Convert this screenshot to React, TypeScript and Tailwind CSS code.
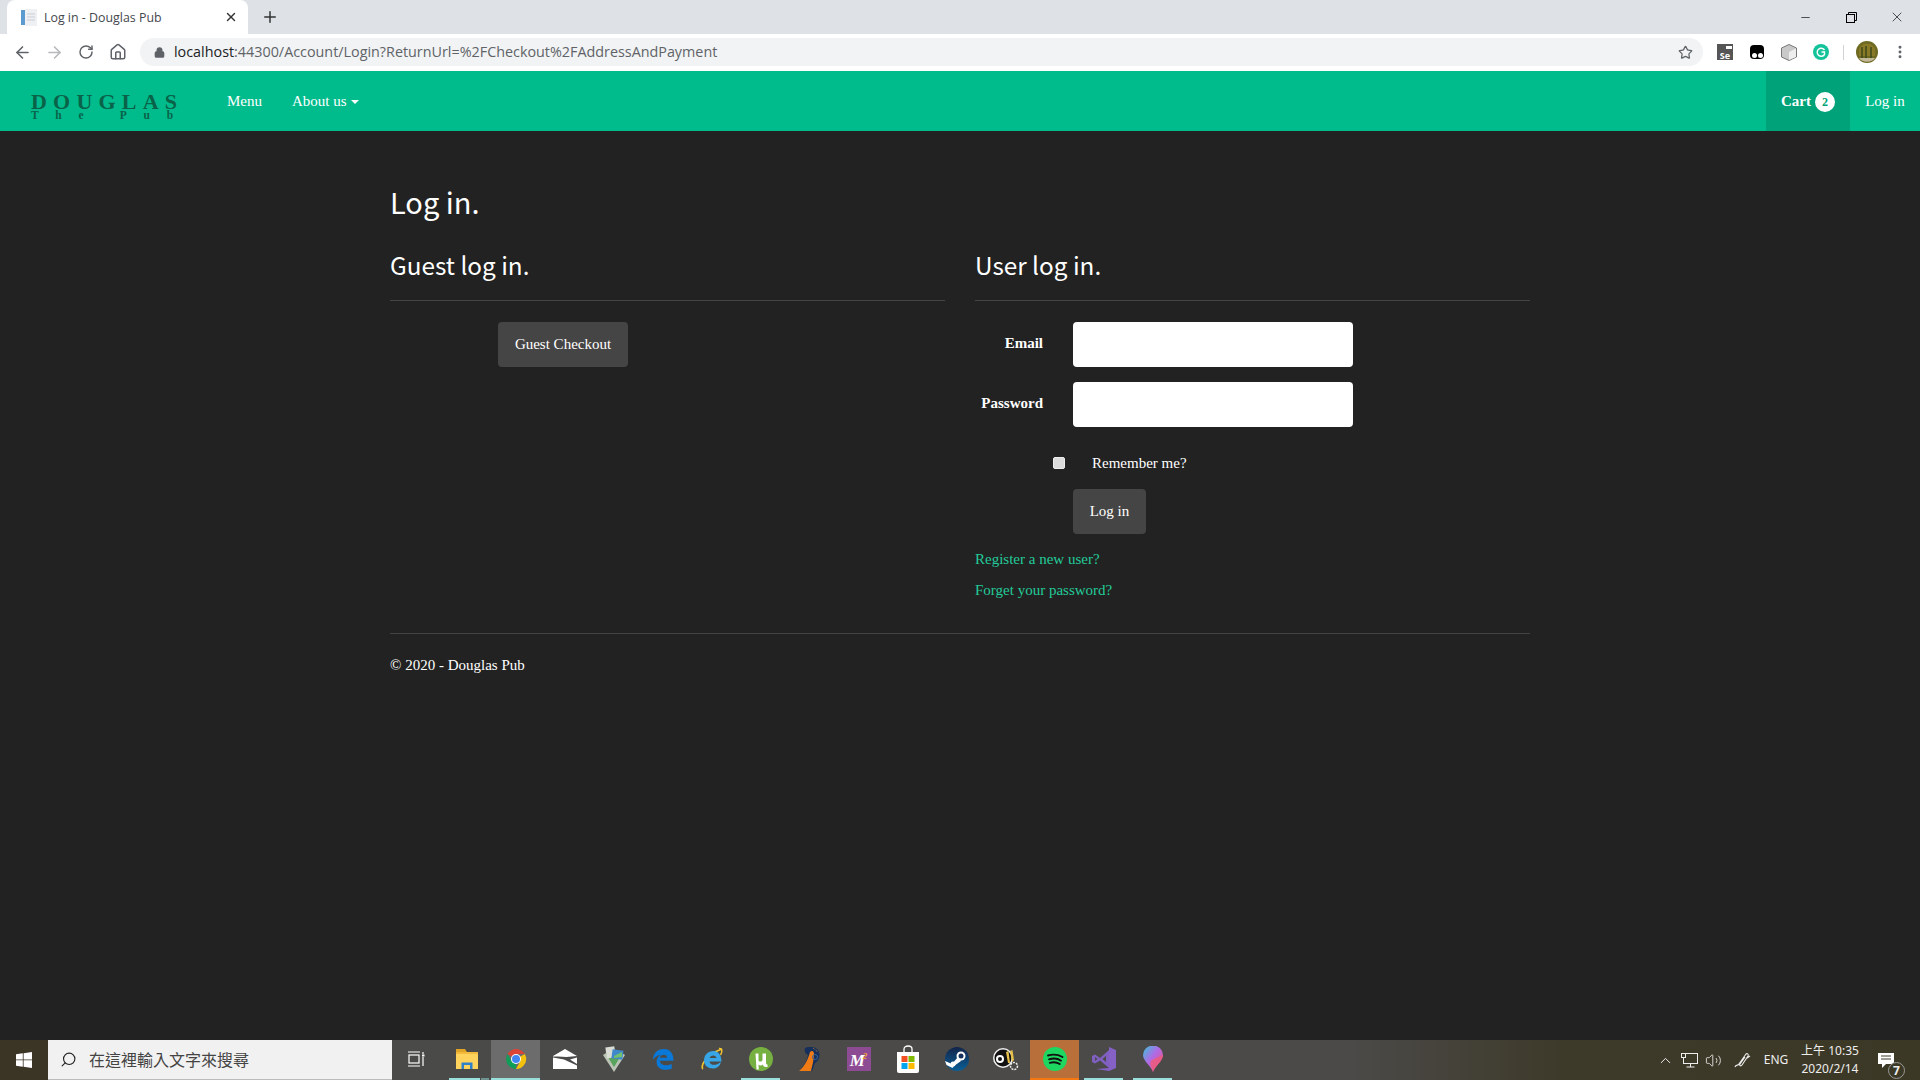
import React from "react";
import { ArrowLeft, ArrowRight, RotateCw, Home, Lock, Star, Plus, X, Minus, MoreVertical, Search, ChevronUp, Volume2 } from "lucide-react";

const Tool = ({ children, className = "" }: { children: React.ReactNode; className?: string }) => (
  <div className={`flex h-full items-center justify-center ${className}`}>{children}</div>
);

const WinLogo = () => (
  <svg width="16" height="16" viewBox="0 0 16 16" fill="#fff">
    <path d="M0 2.3 6.8 1.3V7.5H0zM7.6 1.2 16 0V7.5H7.6zM0 8.3H6.8V14.7L0 13.7zM7.6 8.3H16V16L7.6 14.8z" />
  </svg>
);

const TaskView = () => (
  <svg width="18" height="18" viewBox="0 0 18 18" fill="none" stroke="#fff" strokeWidth="1.2" className="-translate-x-0.5">
    <path d="M1 2H13M1 16H13" />
    <rect x="2" y="5" width="10" height="8" />
    <path d="M16 2V4M16 7V16" />
    <rect x="15" y="4.5" width="2.5" height="2" fill="#fff" stroke="none" />
  </svg>
);

const Folder = () => (
  <svg width="24" height="24" viewBox="0 0 24 24">
    <path d="M1 2H10L12 5H1z" fill="#e0a526" />
    <rect x="1" y="5" width="22" height="17" fill="#ffd35c" />
    <rect x="1" y="5" width="22" height="2" fill="#f2bb3d" />
    <path d="M6.5 22V15.5H17.5V22H15V18H9V22z" fill="#2f80c9" />
  </svg>
);

const Chrome = () => (
  <svg width="24" height="24" viewBox="0 0 48 48">
    <path d="M24 24 7 14A20 20 0 0 1 41.5 14H24z" fill="#db4437" />
    <path d="M24 24 41.5 14A20 20 0 0 1 24 44L33 28z" fill="#f4c20d" />
    <path d="M24 24 24 44A20 20 0 0 1 7 14L15.5 29z" fill="#0f9d58" />
    <circle cx="24" cy="24" r="10" fill="#fff" />
    <circle cx="24" cy="24" r="8" fill="#4285f4" />
  </svg>
);

const Mail = () => (
  <svg width="24" height="20" viewBox="0 0 24 20" fill="#fff">
    <path d="M0 7 12 0 24 7 13.500 8 5 7.500 0 7.500z" />
    <path d="M0 8.500 11 10.500 24 16.500V20H0z" />
    <path d="M17 10.500 24 8.500V15z" />
  </svg>
);

const Shield = () => (
  <svg width="24" height="26" viewBox="0 0 24 26">
    <path d="M1 9 12 26 23 9 20 7 12 20 4 7z" fill="#b9c4b4" />
    <path d="M4 8 12 21 20 8z" fill="#58a45c" />
    <rect x="4" y="1" width="9" height="11" fill="#d8dcd4" transform="rotate(-8 8 6)" />
    <rect x="10" y="4" width="11" height="9" fill="#3f88c9" transform="rotate(8 15 8)" />
    <path d="M12 10 20 6V11L12 12z" fill="#74c16d" />
  </svg>
);

const Edge = () => (
  <svg width="22" height="22" viewBox="0 0 24 24">
    <path d="M1 13C1 6 6 1 13 1C20 1 23.500 6 23.500 14H8.500C9 18.500 15 20.500 21.500 17.500V22.500C13 25.500 4.500 23 5 14.500C5.300 11 7.500 8 10 7C6 7.500 2.500 10 1 13ZM8.500 10.500H16.500C16.500 6.500 10 6 8.500 10.500Z" fill="#0a78d7" />
  </svg>
);

const IE = () => (
  <svg width="24" height="24" viewBox="0 0 24 24">
    <path d="M3 22C0 20 5 8 22 2" fill="none" stroke="#f0c330" strokeWidth="1.700" />
    <path d="M19 1.500C22 1 23 4 20.500 8" fill="none" stroke="#f0c330" strokeWidth="1.500" />
    <path d="M4 13.500C4 8 8 4 13.500 4C18 4 21.500 8 21.500 14.500H9.500C10 18.500 16 19 20 15.500H21C19.500 19.500 16.500 21.500 13 21.500C8 21.500 4 18.500 4 13.500ZM9.500 11H16.500C16 7.500 10.500 7.500 9.500 11Z" fill="#37a5e6" />
  </svg>
);

const UTorrent = () => (
  <svg width="24" height="24" viewBox="0 0 24 24">
    <circle cx="12" cy="12" r="12" fill="#76b041" />
    <path d="M6.500 6.500H9.500V13C9.500 15 13 15 13.500 13V6.500H17V15.500C17 17 17.500 17.500 18.500 17.500V20C15 20.500 14 19 14 17.500C12.500 19 10.500 18.500 9.500 17.500L9.800 22.500H7.500z" fill="#fff" />
  </svg>
);

const Matlabish = () => (
  <svg width="22" height="24" viewBox="0 0 22 24">
    <path d="M6 1C10 -1 15 -.5 18 2C22 6 21 13 16 16C15 18 14 22 13 24H0C4 20 8 14 9 8C7 7 5 5 6 1Z" fill="#15305c" />
    <path d="M11 5C13 3 15 4 15 7C15 12 13 20 12 24H0C5 20 9 13 11 5Z" fill="#f07a14" />
    <circle cx="16" cy="10" r="2.500" fill="none" stroke="#38639a" strokeWidth="1" />
    <path d="M14 1 19 5" stroke="#c47b30" strokeWidth="1" strokeDasharray="1 1" />
  </svg>
);

const Mpurple = () => (
  <div className="flex h-6 w-6 items-end justify-center bg-[#8d4b94] pb-0.5 text-[17px] leading-none font-bold text-white italic [font-family:'Liberation_Serif',serif]">
    M<span className="mb-2 -ml-0.5 text-[9px] leading-none text-[#f0a030]">2</span>
  </div>
);

const Store = () => (
  <svg width="24" height="28" viewBox="0 0 24 28">
    <path d="M8 8V4C8 0 16 0 16 4V8" fill="none" stroke="#fff" strokeWidth="1.300" />
    <path d="M1 7H23V26A2 2 0 0 1 21 28H3A2 2 0 0 1 1 26z" fill="#fff" />
    <rect x="5.500" y="11" width="6" height="6" fill="#f25022" />
    <rect x="12.500" y="11" width="6" height="6" fill="#7fba00" />
    <rect x="5.500" y="18" width="6" height="6" fill="#00a4ef" />
    <rect x="12.500" y="18" width="6" height="6" fill="#ffb900" />
  </svg>
);

const Steam = () => (
  <svg width="24" height="24" viewBox="0 0 24 24">
    <defs>
      <linearGradient id="st" x1="0" y1="0" x2="0" y2="1">
        <stop offset="0" stopColor="#12254a" />
        <stop offset="1" stopColor="#0b5f96" />
      </linearGradient>
    </defs>
    <circle cx="12" cy="12" r="12" fill="url(#st)" />
    <path d="M0 14 7 17 13 10 16 14 9 19 7.500 21 1.500 18z" fill="#fff" />
    <circle cx="16" cy="9" r="4.500" fill="#fff" />
    <circle cx="16" cy="9" r="2.500" fill="#16315c" />
    <circle cx="8" cy="17" r="2.500" fill="#fff" />
  </svg>
);

const Bee = () => (
  <svg width="26" height="24" viewBox="0 0 26 24">
    <ellipse cx="10" cy="11" rx="10" ry="10" fill="#eee" />
    <ellipse cx="10" cy="11" rx="8.500" ry="8.500" fill="#111" />
    <circle cx="7" cy="12" r="4" fill="#fff" />
    <circle cx="7" cy="12" r="2" fill="#111" />
    <path d="M13 5 15 16H17L15.500 4zM17 4 19 15 21 13 19.500 3z" fill="#e6c04a" />
    <circle cx="21" cy="19" r="3.500" fill="none" stroke="#eee" strokeWidth="1.500" strokeDasharray="2 1" />
  </svg>
);

const Spotify = () => (
  <svg width="24" height="24" viewBox="0 0 24 24">
    <circle cx="12" cy="12" r="12" fill="#1ed760" />
    <path d="M5 8.500C10 7 15 7.500 19.500 10M6 12.300C10 11 15 11.500 18 13.700M6.800 15.800C10 15 14 15.200 16.800 17" fill="none" stroke="#111" strokeWidth="1.900" strokeLinecap="round" />
  </svg>
);

const VS = () => (
  <svg width="24" height="24" viewBox="0 0 24 24">
    <path d="M17 0 24 3V21L17 24 4 22 17 21z" fill="#8661c5" />
    <path d="M0 9 3 7.500 8 11 17 3V21L8 13.500 3 16.500 0 15zM3 10V14L5.500 12zM10.500 12 14 15V9z" fill="#7f5fc0" />
  </svg>
);

const Maps = () => (
  <svg width="20" height="26" viewBox="0 0 20 26">
    <defs>
      <linearGradient id="mp" x1="0" y1="0" x2="1" y2="1">
        <stop offset="0" stopColor="#36c6d8" />
        <stop offset=".45" stopColor="#b06ae6" />
        <stop offset="1" stopColor="#f0506e" />
      </linearGradient>
    </defs>
    <path d="M10 26C8 20 0 15 0 9A10 9.500 0 0 1 20 9C20 15 12 20 10 26Z" fill="url(#mp)" />
    <path d="M10 26C9.500 22 5 16 9 14C13 12 17 10 20 9C20 15 12 20 10 26Z" fill="#ef5a7a" opacity=".8" />
  </svg>
);

const taskIcons: { icon: React.ReactNode; bg?: string; line?: React.ReactNode }[] = [
  { icon: <TaskView /> },
  {
    icon: <Folder />,
    line: (
      <div className="flex h-0.5 justify-center gap-px pl-1">
        <div className="w-[31px] bg-[#99dfdc]" />
        <div className="w-2 bg-[#6f9391]" />
      </div>
    ),
  },
  { icon: <Chrome />, bg: "bg-[#6c6c6c]", line: <div className="h-0.5 bg-[#99dfdc]" /> },
  { icon: <Mail /> },
  { icon: <Shield /> },
  { icon: <Edge /> },
  { icon: <IE /> },
  { icon: <UTorrent />, line: <div className="mx-[5px] h-0.5 bg-[#99dfdc]" /> },
  { icon: <Matlabish /> },
  { icon: <Mpurple /> },
  { icon: <Store /> },
  { icon: <Steam /> },
  { icon: <Bee /> },
  { icon: <Spotify />, bg: "bg-[#b86f3a]", line: <div className="h-0.5 bg-[#f5770f]" /> },
  { icon: <VS />, line: <div className="mx-[5px] h-0.5 bg-[#99dfdc]" /> },
  { icon: <Maps />, line: <div className="mx-[5px] h-0.5 bg-[#99dfdc]" /> },
];

const SANS = "[font-family:'Noto_Sans','Noto_Sans_CJK_TC',sans-serif]";
const HEAD = "[font-family:'Noto_Sans_CJK_TC',sans-serif]";

function Browser() {
  return (
    <div className="[font-family:'Open_Sans',sans-serif]">
      <div className="flex h-[34px] items-stretch bg-[#dee1e6] pl-[7px]">
        <div className="flex w-[241px] items-center rounded-t-[8px] bg-white pr-2.5 pl-3.5">
          <svg width="16" height="17" viewBox="0 0 16 17" className="shrink-0">
            <rect x="0" y="1" width="4" height="15" fill="#5b9bd0" />
            <rect x="4" y="0" width="12" height="17" fill="#eef0f3" />
            <path d="M6 5H14M6 8H14M6 11H14" stroke="#c9ced6" strokeWidth="1" />
          </svg>
          <span className="mt-0.5 ml-[7px] flex-1 text-[12.4px] text-[#45484d]">Log in - Douglas Pub</span>
          <X size={14} strokeWidth={2.4} className="text-[#333]" />
        </div>
        <div className="flex w-[44px] items-center justify-center">
          <Plus size={18} strokeWidth={2} className="text-[#333]" />
        </div>
        <div className="flex-1" />
        <Tool className="w-[46px]"><Minus size={13} strokeWidth={1.2} className="text-black" /></Tool>
        <Tool className="w-[46px]">
          <svg width="11" height="11" viewBox="0 0 11 11" fill="none" stroke="#000" strokeWidth="1">
            <rect x=".5" y="2.500" width="8" height="8" />
            <path d="M2.500 2.500V.5H10.500V8.500H8.500" />
          </svg>
        </Tool>
        <Tool className="w-[46px]"><X size={16} strokeWidth={1} className="text-black" /></Tool>
      </div>
      <div className="flex h-[37px] items-center bg-white pb-px pl-1.5">
        <Tool className="w-8"><ArrowLeft size={19} strokeWidth={2} className="text-[#5f6368]" /></Tool>
        <Tool className="w-8"><ArrowRight size={19} strokeWidth={2} className="text-[#b6b8bb]" /></Tool>
        <Tool className="w-8"><RotateCw size={16} strokeWidth={2.2} className="text-[#5f6368]" /></Tool>
        <Tool className="w-8"><Home size={18} strokeWidth={2} className="text-[#5f6368]" /></Tool>
        <div className="ml-1.5 flex h-7 w-[1563px] items-center rounded-full bg-[#f1f3f4] pr-2.5 pl-3.5">
          <Lock size={11} strokeWidth={3} fill="#5f6368" className="text-[#5f6368]" />
          <span className="ml-[9px] flex-1 text-[14.35px] whitespace-nowrap text-[#5f6368]">
            <span className="text-[#202124]">localhost</span>:44300/Account/Login?ReturnUrl=%2FCheckout%2FAddressAndPayment
          </span>
          <Star size={15} strokeWidth={2} className="text-[#5f6368]" />
        </div>
        <Tool className="ml-[6px] w-8">
          <div className="flex h-4 w-4 flex-col items-end justify-between bg-[#555] text-[9px] leading-[9px] font-bold text-white">
            <div className="mt-0.5 mr-px h-[3px] w-1.5 bg-white" />
            <div className="w-full text-center">Se</div>
          </div>
        </Tool>
        <Tool className="w-8">
          <div className="flex h-3.5 w-3.5 items-end justify-center gap-px rounded-sm bg-black pb-[1px]">
            <div className="h-[5px] w-[5px] rounded-full bg-white" />
            <div className="h-[5px] w-[5px] rounded-full bg-white" />
          </div>
        </Tool>
        <Tool className="w-8">
          <svg width="16" height="17" viewBox="0 0 16 17">
            <path d="M8 .5 15.500 4V13L8 16.500 .5 13V4z" fill="#c9c9c9" stroke="#777" />
            <path d="M8 8V16L15 13V4.500z" fill="#eee" />
          </svg>
        </Tool>
        <Tool className="w-8">
          <svg width="16" height="16" viewBox="0 0 16 16">
            <circle cx="8" cy="8" r="8" fill="#15c39a" />
            <path d="M11.500 6A4 4 0 1 0 11.500 10.500V8H8.500" fill="none" stroke="#fff" strokeWidth="1.400" />
          </svg>
        </Tool>
        <div className="ml-[6px] h-[15px] w-px bg-[#d0d2d5]" />
        <Tool className="ml-[4px] w-[38px]">
          <svg width="22" height="22" viewBox="0 0 22 22">
            <circle cx="11" cy="11" r="11" fill="#6f6a22" />
            <path d="M3 8C6 1 16 1 19 8V15H3z" fill="#8a7a28" />
            <path d="M6 6V17M10 5V17M15 6V17" stroke="#3c4a18" strokeWidth="1.500" />
            <path d="M3 17H19C16 22 6 22 3 17Z" fill="#c4b89a" />
          </svg>
        </Tool>
        <Tool className="w-[28px]"><MoreVertical size={16} strokeWidth={2.4} className="text-[#5f6368]" /></Tool>
      </div>
    </div>
  );
}

function Navbar() {
  return (
    <nav className="flex h-[60px] items-stretch bg-[#00bc8c] pl-[31px] text-[15px] text-white">
      <div className="mt-[23px] flex w-[196px] flex-col font-bold text-[#0a6249]">
        <div className="text-[22px] leading-[16px] tracking-[6.2px]">DOUGLAS</div>
        <div className="text-[11.5px] leading-[10px] tracking-[16.7px] whitespace-pre">The Pub</div>
      </div>
      <a className="flex items-center">Menu</a>
      <a className="ml-[30px] flex items-center">
        About us
        <span className="mt-0.5 ml-1 h-0 w-0 border-x-4 border-t-4 border-x-transparent border-t-white" />
      </a>
      <div className="flex-1" />
      <a className="flex w-[84px] items-center justify-center bg-[#00a379] font-bold">
        Cart
        <span className="mt-0.5 ml-1 flex h-5 w-5 items-center justify-center rounded-full bg-white text-[12px] leading-none text-[#00a379]">2</span>
      </a>
      <a className="flex w-[70px] items-center justify-center">Log in</a>
    </nav>
  );
}

function Main() {
  const heading = `${HEAD} font-normal text-white`;
  return (
    <main className="mx-auto w-[1140px] flex-1 text-[15px] text-white">
      <h1 className={`${heading} mt-[48px] h-11 text-[29px] leading-[44px]`}>Log in.</h1>
      <div className="mt-[24px] flex gap-[30px]">
        <section className="w-[555px]">
          <h2 className={`${heading} h-[35px] text-[24.3px] leading-[35px]`}>Guest log in.</h2>
          <hr className="mt-[18px] border-t border-[#444]" />
          <div className="mt-[21px] pl-[108px]">
            <button className="h-[45px] w-[130px] rounded-[4px] bg-[#464545] text-white">Guest Checkout</button>
          </div>
        </section>
        <section className="w-[555px]">
          <h2 className={`${heading} h-[35px] text-[24.3px] leading-[35px]`}>User log in.</h2>
          <hr className="mt-[18px] border-t border-[#444]" />
          <div className="mt-[21px] flex flex-col gap-[15px]">
            <div className="flex items-start">
              <label className="w-[68px] pt-[10px] text-right font-bold">Email</label>
              <input className="ml-[30px] h-[45px] w-[280px] rounded-[4px] bg-white" />
            </div>
            <div className="flex items-start">
              <label className="w-[68px] pt-[10px] text-right font-bold">Password</label>
              <input type="password" className="ml-[30px] h-[45px] w-[280px] rounded-[4px] bg-white" />
            </div>
          </div>
          <div className="mt-[30px] flex h-3 items-center pl-[78px]">
            <div className="h-3 w-3 rounded-[2px] border border-[#eee] bg-[#dcdcdc]" />
            <span className="ml-[27px]">Remember me?</span>
          </div>
          <div className="mt-5 pl-[98px]">
            <button className="h-[45px] w-[73px] rounded-[4px] bg-[#464545] text-white">Log in</button>
          </div>
          <div className="mt-[15px] leading-[21px] text-[#22cc9a]">Register a new user?</div>
          <div className="mt-[10px] leading-[21px] text-[#22cc9a]">Forget your password?</div>
        </section>
      </div>
      <hr className="mt-[32px] border-t border-[#444]" />
      <p className="mt-[21px] leading-[21px]">© 2020 - Douglas Pub</p>
    </main>
  );
}

function Taskbar() {
  return (
    <footer className="flex h-10 items-stretch bg-[linear-gradient(90deg,#3b3526_0,#3b3526_48px,#4a4a48_400px,#4b4a48_1350px,#3e3a2a_1560px,#3c3826_100%)] text-white">
      <div className="flex w-12 items-center justify-center"><WinLogo /></div>
      <div className={`flex w-[344px] items-center border-b border-[#bbb] bg-[#f1f1f1] pl-3 text-[16px] text-[#444] ${SANS}`}>
        <Search size={17} strokeWidth={1.6} className="-scale-x-100 text-[#222]" />
        <span className="ml-[12px]">在這裡輸入文字來搜尋</span>
      </div>
      <div className="w-px" />
      {taskIcons.map((t, i) => (
        <div key={i} className={`flex w-[49px] flex-col ${t.bg ?? ""}`}>
          <div className="flex flex-1 items-center justify-center">{t.icon}</div>
          <div className="h-0.5">{t.line}</div>
        </div>
      ))}
      <div className="flex-1" />
      <div className={`flex items-center text-[12px] text-[#eee] ${SANS}`}>
        <Tool className="w-6"><ChevronUp size={17} strokeWidth={1.4} /></Tool>
        <Tool className="w-6">
          <svg width="17" height="15" viewBox="0 0 17 15" fill="none" stroke="#eee" strokeWidth="1">
            <rect x="2.500" y=".5" width="14" height="10" />
            <path d="M9.500 10.500V14M5.500 14H13.500" />
            <rect x=".5" y=".5" width="4" height="4" fill="#3c3826" />
          </svg>
        </Tool>
        <Tool className="w-6"><Volume2 size={17} strokeWidth={1.2} /></Tool>
        <Tool className="ml-[3px] w-7">
          <svg width="17" height="17" viewBox="0 0 17 17" fill="none" stroke="#eee" strokeWidth="1.100">
            <path d="M1 15C2 12 4 14 5 12L12 2C13 1 15 2 14 4L8 13C7 14.500 5 14 6 12L11 5M13 6 16 4" />
          </svg>
        </Tool>
        <div className="ml-[3px] w-[34px] text-center">ENG</div>
        <div className="ml-[6px] flex w-[62px] flex-col items-center leading-[18px]">
          <span>上午 10:35</span>
          <span>2020/2/14</span>
        </div>
        <div className="relative ml-[11px] flex w-[48px] items-center justify-center pr-5">
          <svg width="16" height="16" viewBox="0 0 16 16" fill="#fff">
            <path d="M0 1H16V12H8L4 16V12H0z" />
            <path d="M3 4H13M3 7H13" stroke="#3c3826" strokeWidth="1" />
          </svg>
          <span className="absolute top-[10px] left-[16px] flex h-[17px] w-[17px] items-center justify-center rounded-full border border-[#999] bg-[#3c3826] text-[12px] leading-none font-bold">7</span>
        </div>
      </div>
    </footer>
  );
}

export default function App() {
  return (
    <div className="flex h-[1080px] flex-col overflow-hidden bg-[#222222] [font-family:'Liberation_Serif',serif]">
      <Browser />
      <Navbar />
      <Main />
      <Taskbar />
    </div>
  );
}
